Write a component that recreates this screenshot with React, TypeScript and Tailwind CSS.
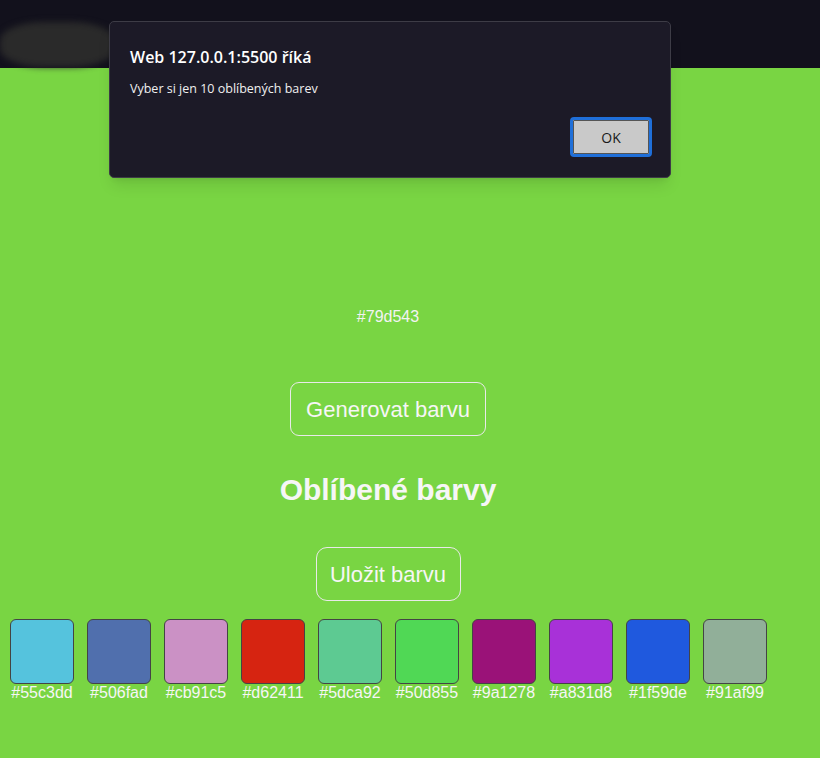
import React from "react";

const favs = [
  "#55c3dd",
  "#506fad",
  "#cb91c5",
  "#d62411",
  "#5dca92",
  "#50d855",
  "#9a1278",
  "#a831d8",
  "#1f59de",
  "#91af99",
];

const App = () => {
  return (
    <div className="relative w-[820px] h-[758px] overflow-hidden bg-[#79d543] font-['Liberation_Sans',Arial,sans-serif] text-white">
      {/* browser top strip */}
      <div className="h-[68px] bg-[#12111c] relative">
        <div className="absolute left-0 top-[22px] w-[115px] h-[45px] rounded-[40%] bg-[#2a2a2a] blur-[3px]" />
      </div>

      <div className="w-[776px] flex flex-col items-center">
        <p className="mt-[240px] text-[16px] leading-[18px] text-[#f3f3f3]">#79d543</p>
        <button className="mt-[56px] h-[54px] w-[196px] rounded-[9px] border border-[#e9e9e9] text-[22px] text-[#f6f6f6]">
          Generovat barvu
        </button>
        <h2 className="mt-[37px] text-[30px] leading-[34px] font-bold text-[#f6f6f6]">Oblíbené barvy</h2>
        <button className="mt-[40px] h-[54px] w-[145px] rounded-[11px] border border-[#e9e9e9] text-[22px] text-[#f6f6f6]">
          Uložit barvu
        </button>
      </div>

      <div className="flex gap-[13px] pl-[10px] mt-[18px]">
        {favs.map((c) => (
          <div key={c} className="w-[64px] flex flex-col items-center">
            <div className="w-[64px] h-[65px] rounded-[6px] border border-[#444]" style={{ backgroundColor: c }} />
            <span className="text-[16px] leading-[18px] text-[#f6f6f6] whitespace-nowrap">{c}</span>
          </div>
        ))}
      </div>

      {/* alert dialog */}
      <div className="absolute left-[109px] top-[21px] w-[562px] h-[157px] rounded-[5px] border border-[#3d3c46] bg-[#1c1a27] shadow-lg font-['Open_Sans',sans-serif]">
        <p className="absolute left-[20px] top-[23px] text-[16px] font-semibold text-white">Web 127.0.0.1:5500 říká</p>
        <p className="absolute left-[20px] top-[58px] text-[12.5px] text-[#f0f0f0]">Vyber si jen 10 oblíbených barev</p>
        <button className="absolute left-[460px] top-[95px] w-[82px] h-[40px] rounded-[4px] border-[3px] border-[#1f6fd9] bg-[#c9c9c9] text-[14px] text-[#1a1a1a] outline outline-1 outline-[#555] -outline-offset-4">
          OK
        </button>
      </div>
    </div>
  );
};

export default App;
